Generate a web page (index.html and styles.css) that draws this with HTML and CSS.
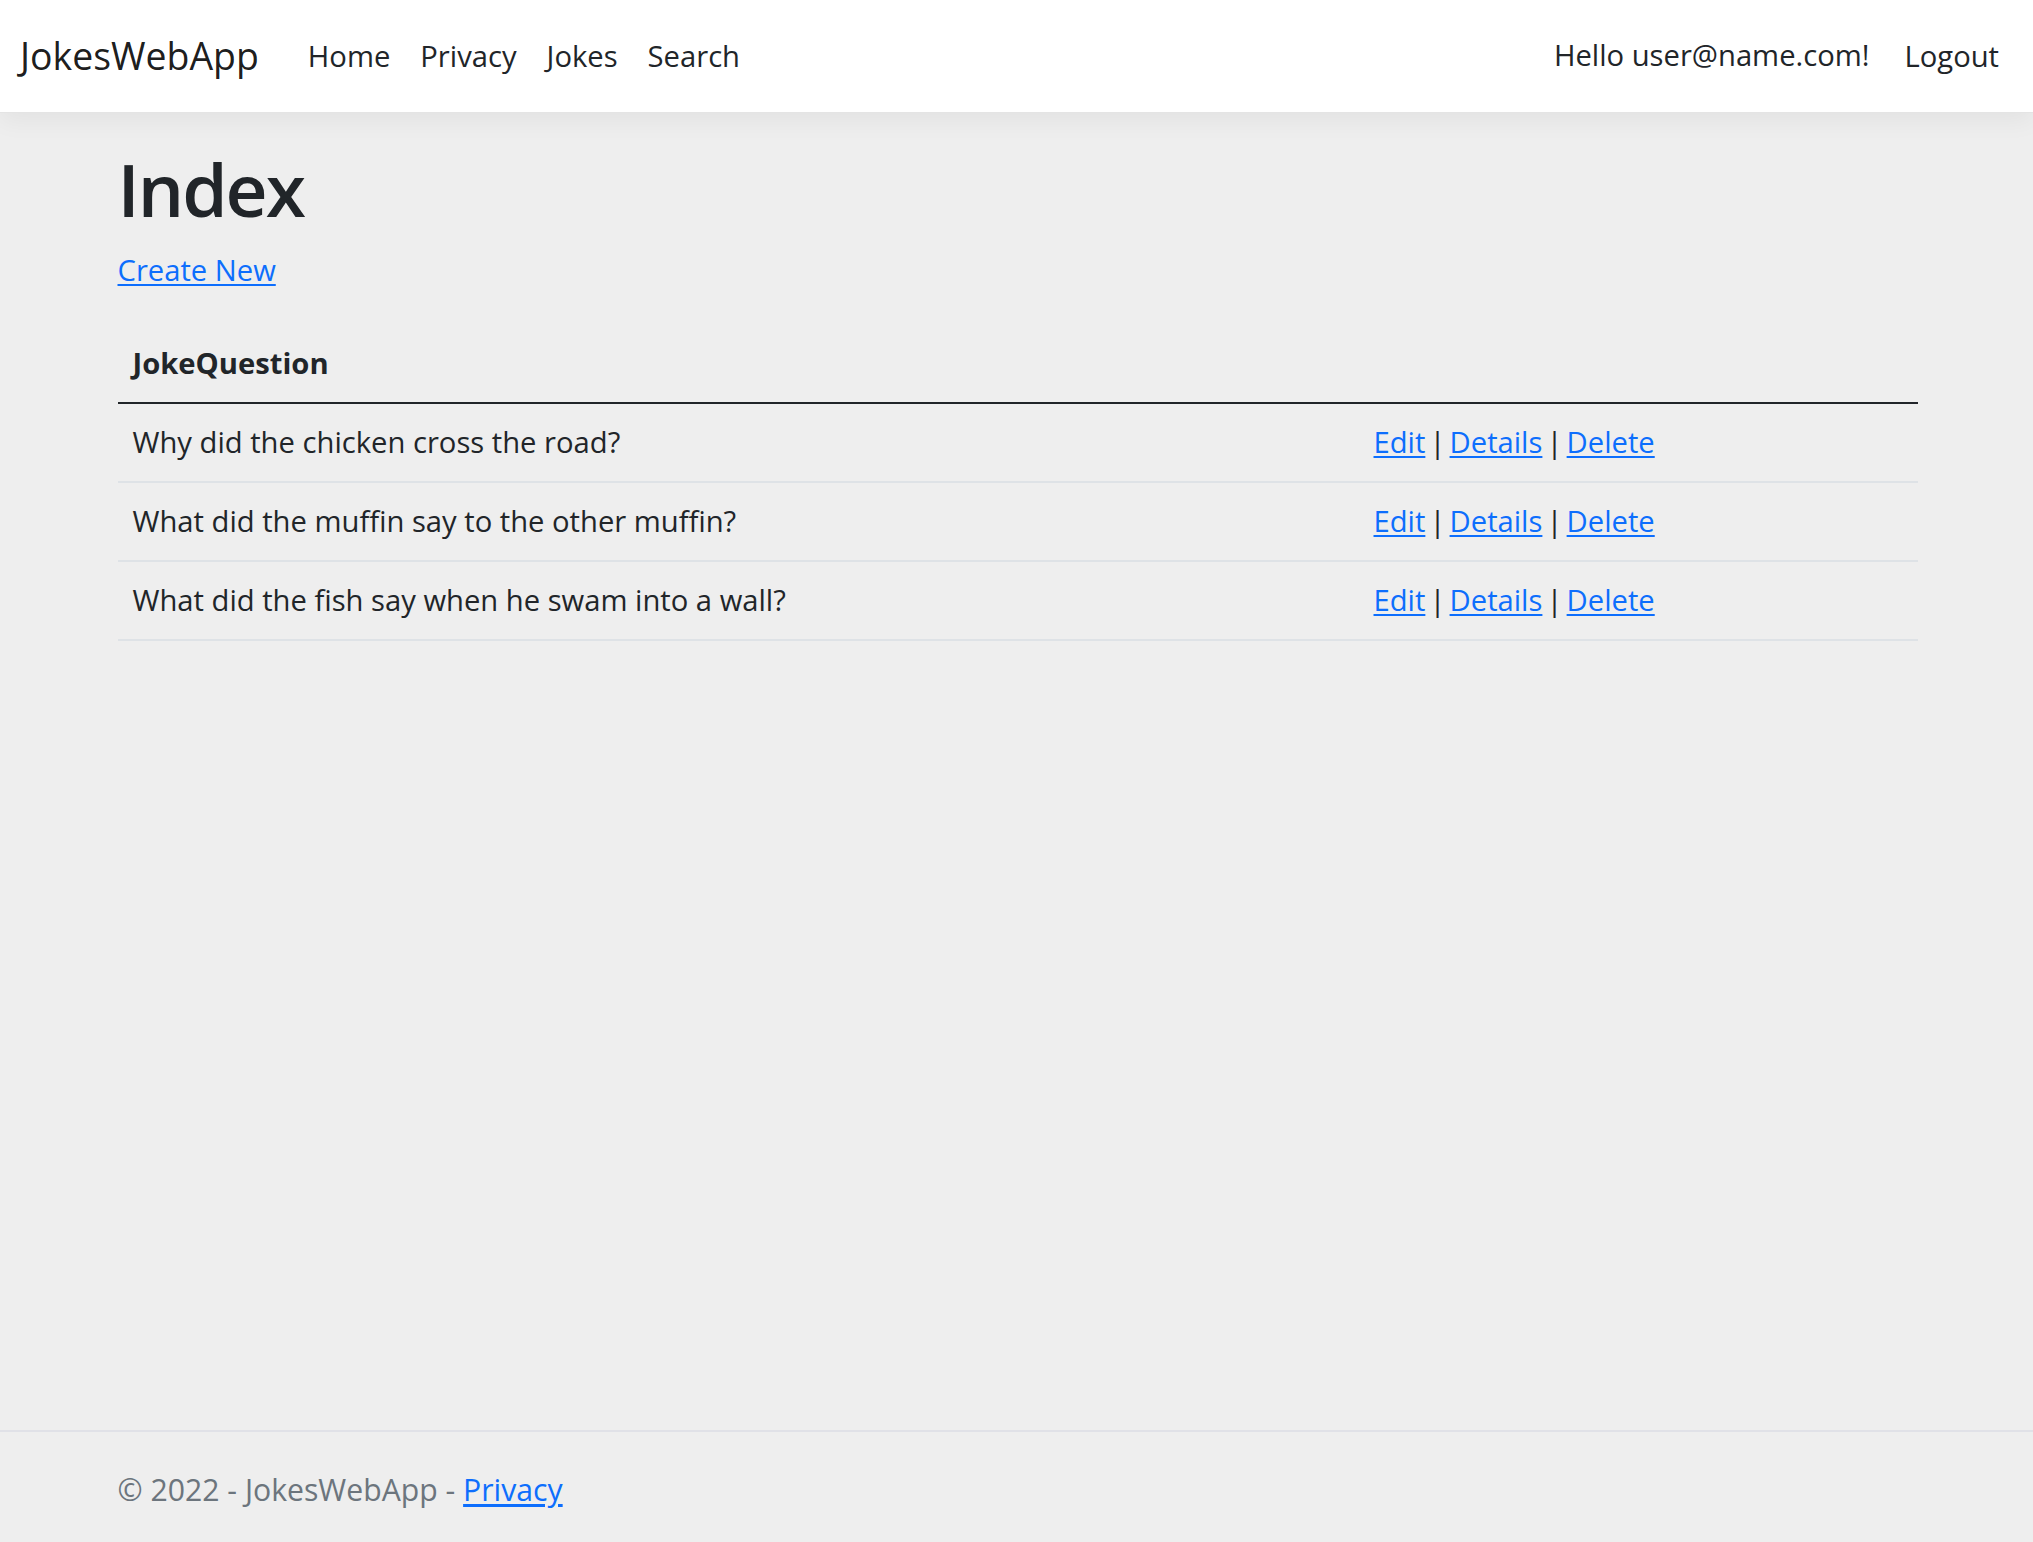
FILE: index.html
```html
<!DOCTYPE html>
<html lang="en">
<head>
<meta charset="utf-8">
<title>Index - JokesWebApp</title>
<link rel="stylesheet" href="styles.css">
</head>
<body>
<header>
  <nav class="navbar">
    <a class="brand" href="#">JokesWebApp</a>
    <ul class="nav-list">
      <li><a class="nav-link" href="#">Home</a></li>
      <li><a class="nav-link" href="#">Privacy</a></li>
      <li><a class="nav-link" href="#">Jokes</a></li>
      <li><a class="nav-link" href="#">Search</a></li>
    </ul>
    <ul class="nav-list nav-right">
      <li><a class="nav-link hello" href="#">Hello user@name.com!</a></li>
      <li><form class="logout-form"><button type="button" class="nav-link logout">Logout</button></form></li>
    </ul>
  </nav>
</header>
<div class="container main-wrap">
  <main class="main">
    <h1 class="title">Index</h1>
    <p class="create"><a href="#">Create New</a></p>
    <table class="table">
      <thead>
        <tr>
          <th class="col-question">JokeQuestion</th>
          <th></th>
        </tr>
      </thead>
      <tbody>
        <tr>
          <td>Why did the chicken cross the road?</td>
          <td class="actions"><a href="#">Edit</a> | <a href="#">Details</a> | <a href="#">Delete</a></td>
        </tr>
        <tr>
          <td>What did the muffin say to the other muffin?</td>
          <td class="actions"><a href="#">Edit</a> | <a href="#">Details</a> | <a href="#">Delete</a></td>
        </tr>
        <tr>
          <td>What did the fish say when he swam into a wall?</td>
          <td class="actions"><a href="#">Edit</a> | <a href="#">Details</a> | <a href="#">Delete</a></td>
        </tr>
      </tbody>
    </table>
  </main>
</div>
<footer class="footer">
  <div class="container">&copy; 2022 - JokesWebApp - <a href="#">Privacy</a></div>
</footer>
</body>
</html>
```
FILE: styles.css
```css
* { box-sizing: border-box; }

html, body {
  margin: 0;
  padding: 0;
}

body {
  min-height: 100vh;
  display: flex;
  flex-direction: column;
  background: #eeeeee;
  color: #212529;
  font-family: "Open Sans", "Noto Sans", "Liberation Sans", sans-serif;
  font-size: 29.2px;
  line-height: 46px;
}

a { color: #0d6efd; text-decoration: underline; text-underline-offset: 3px; }

/* navbar */
.navbar {
  height: 113px;
  background: #ffffff;
  border-bottom: 1px solid #e4e4e4;
  box-shadow: 0 8px 23px rgba(0, 0, 0, 0.05);
  display: flex;
  align-items: center;
  padding: 0 19px 0 20px;
  position: relative;
  z-index: 1;
}

.brand {
  font-size: 37.4px;
  line-height: 58px;
  color: rgba(0, 0, 0, 0.9);
  text-decoration: none;
  margin-right: 34px;
}

.nav-list {
  list-style: none;
  margin: 0;
  padding: 0;
  display: flex;
  align-items: center;
}

.nav-right { margin-left: auto; }

.nav-link {
  display: block;
  padding: 0 15px;
  color: #212529;
  text-decoration: none;
  font-size: 29.2px;
  line-height: 46px;
}

.hello {
  position: relative;
  top: -1px;
  padding-right: 20px;
}

.logout-form { margin: 0; }

.logout {
  font-family: inherit;
  background: none;
  border: 0;
  cursor: pointer;
}

/* main */
.container {
  width: 100%;
  max-width: 1844px;
  margin: 0 auto;
  padding: 0 21px 0 23px;
}

.main-wrap { flex: 1; }

.main { padding-top: 30px; padding-bottom: 31px; }

.title {
  margin: 0 0 12px;
  font-size: 73px;
  line-height: 92px;
  font-weight: 600;
  letter-spacing: -2px;
}

.create { margin: 0 0 32px; }

.table {
  width: 100%;
  table-layout: fixed;
  border-collapse: collapse;
  margin-bottom: 31px;
}

.table th,
.table td {
  padding: 15px 15px;
  line-height: 47px;
  text-align: left;
  vertical-align: top;
  border-bottom: 2px solid #dee2e6;
}

.table th {
  font-weight: 700;
  border-bottom: 2px solid #212529;
}

.table .actions { word-spacing: -3.5px; }

.col-question { width: 1241px; }

/* footer */
.footer {
  border-top: 2px solid #e0e1e7;
  color: #6c757d;
  padding-top: 6px;
  font-size: 30.2px;
  line-height: 104px;
  white-space: nowrap;
}
```
